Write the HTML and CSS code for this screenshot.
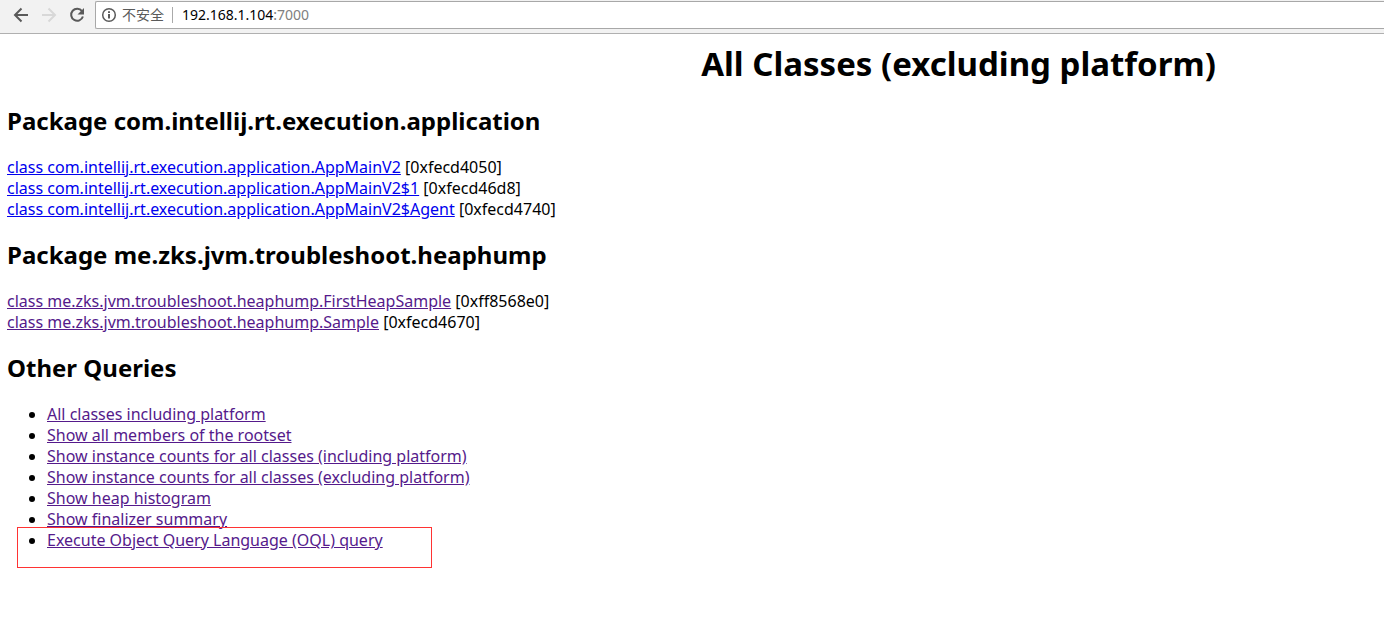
FILE: index.html
```html
<!DOCTYPE html>
<html lang="en">
<head>
<meta charset="utf-8">
<title>All Classes (excluding platform)</title>
<link rel="stylesheet" href="styles.css">
</head>
<body>
<header class="toolbar">
  <button class="nav" type="button" aria-label="Back"><svg viewBox="0 0 16 16"><path d="M15 8H2M8.500 1.500L2 8l6.500 6.500"/></svg></button>
  <button class="nav nav-off" type="button" aria-label="Forward" disabled><svg viewBox="0 0 16 16"><path d="M1 8h13M7.500 1.500L14 8l-6.500 6.500"/></svg></button>
  <button class="nav" type="button" aria-label="Reload"><svg viewBox="0 0 16 16"><path d="M13 4.200A6 6 0 1 0 13.900 9.500"/><path class="solid" d="M15 1v6.500H8.500z"/></svg></button>
  <div class="address">
    <svg class="info" viewBox="0 0 16 16"><circle cx="8" cy="8" r="6.300"/><path d="M8 7v4.500M8 4.300v1.700"/></svg>
    <span class="status">不安全</span>
    <span class="url">192.168.1.104<span class="port">:7000</span></span>
  </div>
</header>
<main class="page">
  <h1>All Classes (excluding platform)</h1>
  <h2>Package com.intellij.rt.execution.application</h2>
  <p><a href="#a">class com.intellij.rt.execution.application.AppMainV2</a> [0xfecd4050]<br>
  <a href="#b">class com.intellij.rt.execution.application.AppMainV2$1</a> [0xfecd46d8]<br>
  <a href="#c">class com.intellij.rt.execution.application.AppMainV2$Agent</a> [0xfecd4740]</p>
  <h2>Package me.zks.jvm.troubleshoot.heaphump</h2>
  <p><a class="seen" href="#d">class me.zks.jvm.troubleshoot.heaphump.FirstHeapSample</a> [0xff8568e0]<br>
  <a class="seen" href="#e">class me.zks.jvm.troubleshoot.heaphump.Sample</a> [0xfecd4670]</p>
  <h2>Other Queries</h2>
  <ul class="queries">
    <li><a class="seen" href="#f">All classes including platform</a></li>
    <li><a class="seen" href="#g">Show all members of the rootset</a></li>
    <li><a class="seen" href="#h">Show instance counts for all classes (including platform)</a></li>
    <li><a class="seen" href="#i">Show instance counts for all classes (excluding platform)</a></li>
    <li><a class="seen" href="#j">Show heap histogram</a></li>
    <li><a class="seen" href="#k">Show finalizer summary</a></li>
    <li class="marked"><a class="seen" href="#l">Execute Object Query Language (OQL) query</a></li>
  </ul>
</main>
</body>
</html>
```
FILE: styles.css
```css
*, *::before { box-sizing: border-box; }
body {
  margin: 0;
  background: #fff;
  color: #000;
  font: 16px/21px "Noto Sans", "Noto Sans CJK SC", sans-serif;
}
.toolbar {
  display: flex;
  align-items: center;
  height: 34px;
  padding: 0 0 4px 13px;
  gap: 12px;
  background: #f2f2f2;
  border-bottom: 1px solid #b0b0b0;
}
.nav { width: 16px; height: 16px; padding: 0; border: 0; background: none; color: #5a5a5a; }
.nav-off { color: #d8d8d8; }
svg { display: block; width: 16px; height: 16px; fill: none; stroke: currentColor; stroke-width: 2; }
.solid { fill: currentColor; stroke: none; }
.address {
  flex: 1;
  display: flex;
  align-items: center;
  height: 28px;
  margin-left: -2px;
  padding-left: 5px;
  background: #fff;
  border: 1px solid #a8a8a8;
  border-right: 0;
  border-radius: 2px 0 0 2px;
  font-size: 14px;
  line-height: 16px;
}
.info { color: #5a5a5a; }
.info circle { stroke-width: 1.500; }
.status { margin-left: 5px; padding-right: 8px; border-right: 1px solid #aaa; color: #5a5a5a; }
.url { margin-left: 9px; }
.port { color: #808080; }
.page { padding: 8px 8px 20px 7px; }
h1 { margin: 0 0 19px 534px; text-align: center; font-size: 33px; line-height: 44px; }
h2 { margin: 19px 0 21px; font-size: 24px; line-height: 31px; }
p { margin: 0; }
a { color: #0000ee; }
.seen { color: #551a8b; }
.queries { margin: 0; padding-left: 40px; }
.marked { position: relative; }
.marked::before {
  content: "";
  position: absolute;
  left: -30px;
  top: -3px;
  width: 415px;
  height: 41px;
  border: 1px solid #ff3333;
}
```
